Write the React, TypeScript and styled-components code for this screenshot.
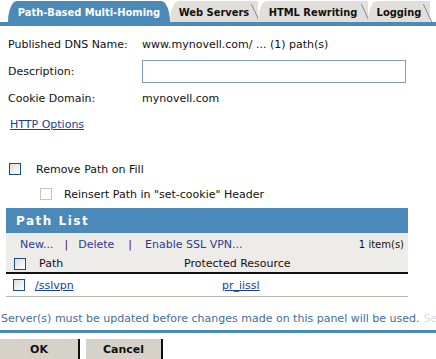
import React from 'react';
import styled, { createGlobalStyle } from 'styled-components';

const GlobalStyle = createGlobalStyle`
  html, body {
    margin: 0;
    padding: 0;
    background: #fff;
    overflow: hidden;
  }
  body {
    font-family: 'DejaVu Sans', Verdana, sans-serif;
    font-size: 11px;
    color: #111;
  }
`;

const BLUE = '#4a89b8';

const Page = styled.div`
  width: 436px;
  height: 359px;
  display: flex;
  flex-direction: column;
  overflow: hidden;
`;

const TabBar = styled.div`
  display: flex;
  align-items: flex-end;
  height: 22px;
  padding-left: 8px;
  border-bottom: 4px solid ${BLUE};
`;

const Tab = styled.div<{ $active?: boolean; $width: number }>`
  position: relative;
  width: ${(p) => p.$width}px;
  height: 21px;
  box-sizing: border-box;
  display: flex;
  align-items: center;
  justify-content: center;
  padding-top: 1px;
  white-space: nowrap;
  font-family: 'DejaVu Sans Condensed', 'DejaVu Sans', sans-serif;
  font-weight: bold;
  font-size: 11px;
  color: ${(p) => (p.$active ? '#fff' : '#111')};
  background: ${(p) => (p.$active ? BLUE : '#e2dfda')};
  border-top-left-radius: 9px 21px;
  border-top-right-radius: ${(p) => (p.$active ? '9px 21px' : '0')};
  ${(p) =>
    !p.$active &&
    `
    &::after {
      content: '';
      position: absolute;
      right: 2px;
      top: 3px;
      width: 1px;
      height: 18px;
      background: #8d8a85;
      transform: skewX(25deg);
    }
  `}
`;

const Form = styled.div`
  display: grid;
  grid-template-columns: 134px 264px;
  grid-auto-rows: 27px;
  align-items: center;
  padding: 5px 0 0 8px;
`;

const Value = styled.div``;

const TextInput = styled.input`
  width: 264px;
  height: 23px;
  box-sizing: border-box;
  border: 1px solid #7f9db9;
  margin: 0;
`;

const Link = styled.a`
  color: #1c3e94;
  text-decoration: underline;
  cursor: pointer;
`;

const OptionsLink = styled(Link)`
  margin: 6px 0 0 10px;
`;

const Checks = styled.div`
  display: flex;
  flex-direction: column;
  gap: 7px;
  margin-top: 29px;
`;

const CheckRow = styled.label<{ $indent: number }>`
  display: flex;
  align-items: center;
  padding-left: ${(p) => p.$indent}px;
  height: 18px;
`;

const Box = styled.span<{ $disabled?: boolean; $gap: number }>`
  width: 12px;
  height: 12px;
  box-sizing: border-box;
  border: 1px solid ${(p) => (p.$disabled ? '#c9c5bb' : '#1c4f80')};
  background: ${(p) =>
    p.$disabled ? '#fff' : 'linear-gradient(135deg, #dcdcd8, #ffffff)'};
  margin-right: ${(p) => p.$gap}px;
  flex: none;
`;

const ListPanel = styled.div`
  width: 402px;
  margin: 5px 0 0 6px;
`;

const ListTitle = styled.div`
  height: 25px;
  background: ${BLUE};
  color: #fff;
  font-weight: bold;
  font-size: 12px;
  letter-spacing: 1.5px;
  display: flex;
  align-items: center;
  padding-left: 10px;
`;

const Toolbar = styled.div`
  background: #eeece8;
  height: 22px;
  display: flex;
  align-items: center;
  padding: 0 4px 0 14px;
`;

const ToolLink = styled.span`
  color: #2a3c92;
`;

const Sep = styled.span<{ $left: number; $right: number }>`
  color: #5a1050;
  margin: 0 ${(p) => p.$right}px 0 ${(p) => p.$left}px;
`;

const Count = styled.span`
  margin-left: auto;
  font-size: 10px;
`;

const HeadRow = styled.div`
  background: #eeece8;
  height: 17px;
  display: grid;
  grid-template-columns: 25px 145px 1fr;
  align-items: center;
  padding-left: 8px;
  border-bottom: 2px solid #111;
`;

const HeadCell = styled.span`
  color: #111;
`;

const DataRow = styled.div`
  height: 22px;
  display: grid;
  grid-template-columns: 22px 187px 1fr;
  align-items: center;
  padding-left: 7px;
  border-bottom: 1px solid #b8b6b0;
`;

const Notice = styled.div`
  margin-top: 12px;
  height: 18px;
  color: #3f6e9a;
  white-space: nowrap;
  padding: 0 0 3px 1px;
  border-bottom: 3px solid ${BLUE};
  display: flex;
  align-items: center;
`;

const Ghost = styled.span`
  color: #d8dde4;
  margin-left: 4px;
`;

const Buttons = styled.div`
  display: flex;
  gap: 6px;
  margin-top: 6px;
`;

const Button = styled.button<{ $width: number }>`
  width: ${(p) => p.$width}px;
  height: 20px;
  border: none;
  border-right: 2px solid #111;
  background: #d6d2ca;
  font-family: inherit;
  font-size: 11px;
  font-weight: bold;
  color: #111;
  padding: 0;
`;

export default function App() {
  return (
    <Page>
      <GlobalStyle />
      <TabBar>
        <Tab $active $width={162}>Path-Based Multi-Homing</Tab>
        <Tab $width={88}>Web Servers</Tab>
        <Tab $width={110}>HTML Rewriting</Tab>
        <Tab $width={62}>Logging</Tab>
      </TabBar>

      <Form>
        <span>Published DNS Name:</span>
        <Value>www.mynovell.com/ ... (1) path(s)</Value>
        <span>Description:</span>
        <TextInput />
        <span>Cookie Domain:</span>
        <Value>mynovell.com</Value>
      </Form>
      <OptionsLink>HTTP Options</OptionsLink>

      <Checks>
        <CheckRow $indent={9}>
          <Box $gap={15} />
          Remove Path on Fill
        </CheckRow>
        <CheckRow $indent={40}>
          <Box $disabled $gap={12} />
          Reinsert Path in "set-cookie" Header
        </CheckRow>
      </Checks>

      <ListPanel>
        <ListTitle>Path List</ListTitle>
        <Toolbar>
          <ToolLink>New...</ToolLink>
          <Sep $left={11} $right={10}>|</Sep>
          <ToolLink>Delete</ToolLink>
          <Sep $left={14} $right={13}>|</Sep>
          <ToolLink>Enable SSL VPN...</ToolLink>
          <Count>1 item(s)</Count>
        </Toolbar>
        <HeadRow>
          <Box $gap={0} />
          <HeadCell>Path</HeadCell>
          <HeadCell>Protected Resource</HeadCell>
        </HeadRow>
        <DataRow>
          <Box $gap={0} />
          <Link>/sslvpn</Link>
          <Link>pr_iissl</Link>
        </DataRow>
      </ListPanel>

      <Notice>
        Server(s) must be updated before changes made on this panel will be used.
        <Ghost>Se</Ghost>
      </Notice>
      <Buttons>
        <Button $width={80}>OK</Button>
        <Button $width={77}>Cancel</Button>
      </Buttons>
    </Page>
  );
}
